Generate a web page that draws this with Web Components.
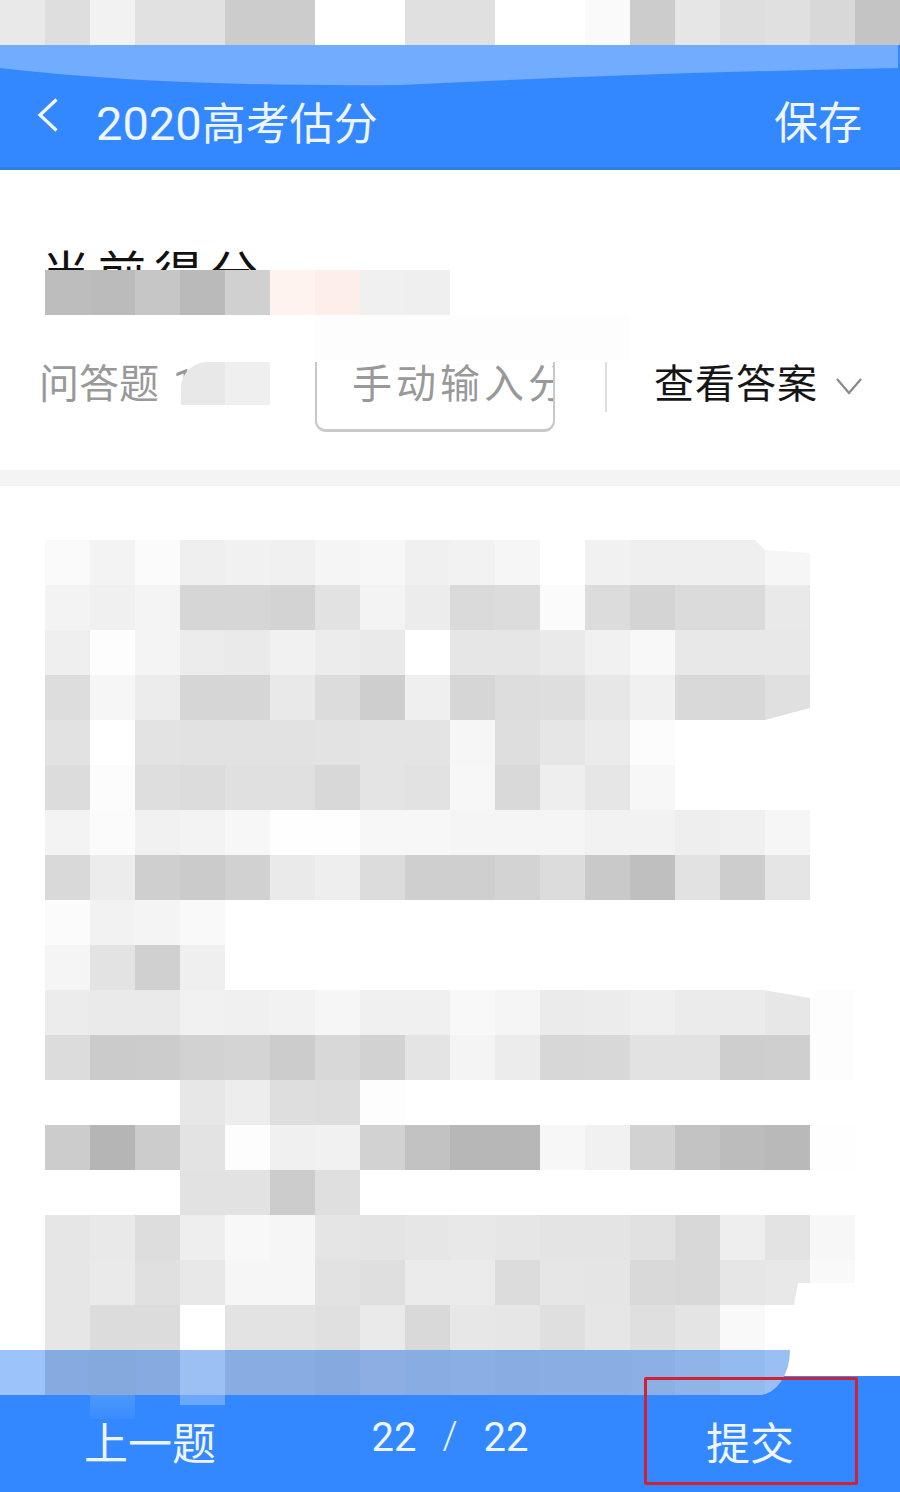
<!DOCTYPE html>
<html lang="zh">
<head>
<meta charset="utf-8">
<title>2020高考估分</title>
<style>
html,body{margin:0;padding:0;background:#fff}
body{width:900px;height:1492px;overflow:hidden;display:flex;flex-direction:column;font-family:Roboto,"Noto Sans CJK SC",sans-serif}
</style>
</head>
<body>
<mosaic-grid cell="45" data="e9 de f2 e1 e1 cc cc ff ff e0 e0 ff ff fa cc e6 de e0 d8 c4"></mosaic-grid>
<app-header>
  <span slot="title"><span style="font-size:47px">2020</span>高考估分</span>
  <span slot="action">保存</span>
</app-header>
<score-panel label="当前得分" data="bd bb c6 ba d0 fff3ef fdeeea f0 ef"></score-panel>
<action-row></action-row>
<section-gap></section-gap>
<question-body>
<mosaic-grid cell="45" cut data="
fa f3 fb ef f1 f0 f5 f7 f0 f2 f6 ff f1 ef ef ef f6 ff;
f3 f0 f4 d6 d6 d3 e2 f3 ec da dc fb dc d4 db db e9 ff;
ef fd f4 ec ea f1 ec ea ff e6 e6 ea f1 f8 e8 e8 e8 ff;
dd f6 ec d6 d6 e9 dc ce ef d6 dd de e7 f0 d9 d8 e0 ff;
e2 ff e3 e2 e2 e2 e3 e4 e4 f6 de e6 eb fc ff ff ff ff;
dc fc de dc e0 e0 d8 e4 e2 f7 d9 ee e6 f7 ff ff ff ff;
f3 fb f1 f3 f7 fe fe f7 f7 f5 f5 f5 f2 f2 ee f0 f6 ff;
d9 ec cf cb d1 ea ee dc cf cf d3 dc c9 bf e2 cd e5 ff;
fb f2 f4 f9 ff ff ff ff ff ff ff ff ff ff ff ff ff ff;
f5 e3 d0 ef ff ff ff ff ff ff ff ff ff ff ff ff ff ff;
ec ea ea f1 f0 f2 f6 f0 f0 f8 f5 eb ec ef eb eb e7 fd;
dc cb cc d2 d4 cc d8 d2 e4 f4 ec d7 d8 e2 e2 ce cf fd;
ff ff ff e7 ed de dd fd ff ff ff ff ff ff ff ff ff ff;
cc b5 cc e3 fd f0 f1 d2 c2 b7 b7 f7 f1 d2 c3 bc b9 fe;
ff ff ff e2 e2 cc df ff ff ff ff ff ff ff ff ff ff ff;
e6 e9 dd ee f8 f6 e5 e4 e6 e8 e6 e4 e4 e1 d8 ee e3 f7;
e6 ea e0 e8 f6 f6 e2 df eb eb dc e6 e5 d9 d8 e6 e8 f9;
e6 dc dc ff e3 e3 e0 ea d9 e7 e6 df e6 df e4 f9 ff ff"></mosaic-grid>
</question-body>
<bottom-nav>
  <span slot="prev">上一题</span>
  <span slot="current">22</span>
  <span slot="total">22</span>
  <span slot="submit">提交</span>
</bottom-nav>

<script>
class MosaicGrid extends HTMLElement{
  connectedCallback(){
    const size=+this.getAttribute('cell')||45;
    const rows=(this.getAttribute('data')||'').trim().split(';').map(r=>r.trim().split(/\s+/));
    const cols=rows[0].length;
    const root=this.attachShadow({mode:'open'});
    const cells=rows.flat().map(v=>{
      const c=v.length===2?'#'+v+v+v:'#'+v;
      return `<i style="background:${c}"></i>`;
    }).join('');
    const cut=this.hasAttribute('cut')?`<svg class="cut" width="${cols*size}" height="${rows.length*size}" aria-hidden="true"><path fill="#fff" d="M710 0 720 10 765 13V0ZM765 168 720 180H765ZM718 450 765 458V450ZM753 743 749 765H810V743Z"/></svg>`:'';
    root.innerHTML=`<style>
      :host{display:block;flex:none;position:relative;width:${cols*size}px;height:${rows.length*size}px}
      .g{display:grid;grid-template-columns:repeat(${cols},${size}px);grid-auto-rows:${size}px}
      i{display:block}
      .cut{position:absolute;left:0;top:0}
    </style><div class="g">${cells}</div>${cut}`;
  }
}
customElements.define('mosaic-grid',MosaicGrid);

class AppHeader extends HTMLElement{
  constructor(){
    super();
    this.attachShadow({mode:'open'}).innerHTML=`<style>
      :host{display:block;flex:none;position:relative;height:125px;box-sizing:border-box;background:#3388ff;border-bottom:3px solid #2e80e6;color:#eef5ff;overflow:hidden}
      .wave{position:absolute;left:0;top:0}
      .row{position:relative;display:flex;align-items:flex-start;height:100%;box-sizing:border-box;padding:52px 38px 0 37px}
      .back{flex:none;width:22px;height:36px;margin-right:37px}
      .t{font-size:44px;line-height:54px;font-weight:400;white-space:nowrap}
      .sp{flex:1}
      .a{font-size:44px;line-height:54px;font-weight:400;white-space:nowrap}
    </style>
    <svg class="wave" width="900" height="45" viewBox="0 0 900 45" aria-hidden="true"><path fill="#72acff" d="M0 0H898V23Q640 28 400 40Q160 42 0 23Z"/></svg>
    <div class="row">
      <svg class="back" viewBox="0 0 22 36" aria-hidden="true"><path d="M19.500 2.500 3 18 19.500 33.500" fill="none" stroke="#f4f9ff" stroke-width="3.200"/></svg>
      <div class="t"><slot name="title"></slot></div>
      <div class="sp"></div>
      <div class="a"><slot name="action"></slot></div>
    </div>`;
  }
}
customElements.define('app-header',AppHeader);

class ScorePanel extends HTMLElement{
  connectedCallback(){
    const root=this.attachShadow({mode:'open'});
    root.innerHTML=`<style>
      :host{display:block;flex:none;height:145px;box-sizing:border-box;padding:81px 0 0 42px;background:#fff;overflow:hidden}
      .label{height:19px;color:#111;font-size:48px;line-height:48px;letter-spacing:8px;white-space:nowrap}
      mosaic-grid{margin-left:3px}
    </style><div class="label">${this.getAttribute('label')}</div>
    <mosaic-grid cell="45" data="${this.getAttribute('data')}"></mosaic-grid>`;
  }
}
customElements.define('score-panel',ScorePanel);

class ActionRow extends HTMLElement{
  constructor(){
    super();
    this.attachShadow({mode:'open'}).innerHTML=`<style>
      :host{display:block;flex:none;position:relative;height:155px;background:#fff}
      .row{display:flex;align-items:flex-start;box-sizing:border-box;height:100%;padding:47px 0 0 39px;font-size:40px;line-height:46px;white-space:nowrap}
      .q{width:276px;color:#999;word-spacing:4px}
      .btn{box-sizing:border-box;width:240px;height:70px;padding-left:35px;border:solid #c9c9c9;border-width:0 2px 3px;border-radius:0 0 11px 11px;overflow:hidden;color:#999;letter-spacing:4px}
      .div{width:2px;height:50px;margin:0 47px 0 50px;background:#dedede}
      .look{color:#151515;width:164px;letter-spacing:1px}
      svg{flex:none;margin:14px 0 0 17px}
      .faint{position:absolute;left:315px;top:0;width:315px;height:45px;background:#fdfdfd}
      .mask{position:absolute;left:181px;top:47px;width:89px;height:43px;border-radius:26px 0 0 0;display:flex;overflow:hidden}
      .mask i{display:block;height:100%}
    </style>
    <div class="faint"></div>
    <div class="row">
      <div class="q">问答题 1</div>
      <div class="btn">手动输入分</div>
      <div class="div"></div>
      <div class="look">查看答案</div>
      <svg width="28" height="20" viewBox="0 0 28 20" aria-hidden="true"><path d="M2 3 14 17 26 3" fill="none" stroke="#8a8a8a" stroke-width="2.200"/></svg>
    </div>
    <div class="mask"><i style="width:44px;background:#e8e8e8"></i><i style="width:45px;background:#efefef"></i></div>`;
  }
}
customElements.define('action-row',ActionRow);

class SectionGap extends HTMLElement{
  constructor(){
    super();
    this.attachShadow({mode:'open'}).innerHTML=`<style>:host{display:block;flex:none;height:16px;background:#f4f4f4}</style>`;
  }
}
customElements.define('section-gap',SectionGap);

class QuestionBody extends HTMLElement{
  constructor(){
    super();
    this.attachShadow({mode:'open'}).innerHTML=`<style>:host{display:block;flex:none;box-sizing:border-box;height:864px;padding:54px 0 0 45px;background:#fff;overflow:hidden}</style><slot></slot>`;
  }
}
customElements.define('question-body',QuestionBody);

class BottomNav extends HTMLElement{
  constructor(){
    super();
    const band=['9cc4fb','85abe0','84a9dd','85abe1','9cc0f2','87ade2','87ade2','85aae0','8caee3','87ade3','89afe4','88ade2','89aee3','88aee3','8ab0e5','8eb4e8','94bbf0','9abff5']
      .map(c=>`<i style="background:#${c}"></i>`).join('');
    this.attachShadow({mode:'open'}).innerHTML=`<style>
      :host{display:block;flex:none;position:relative;height:142px;color:#eef5ff;overflow:hidden}
      .band{height:45px;background:linear-gradient(#fff 26px,#3388ff 26px)}
      .cells{display:grid;grid-template-columns:repeat(17,45px) 25px;width:790px;height:45px;border-bottom-right-radius:31px 45px;overflow:hidden}
      .cells i{display:block}
      .nav{position:relative;display:grid;grid-template-columns:repeat(3,300px);height:97px;background:#3388ff}
      .ghost{position:absolute;top:0}
      .item{display:flex;justify-content:center;padding-top:28px;font-size:44px;line-height:44px;white-space:nowrap}
      .pager{display:flex;justify-content:center;padding-top:21px;font-size:40px;line-height:44px;white-space:nowrap}
      .slash{width:67px;text-align:center;font-size:38px;line-height:40px;font-weight:300}
      .mark{position:absolute;left:644px;top:27px;box-sizing:border-box;width:214px;height:108px;border:3px solid #cf2233;border-radius:2px}
    </style>
    <div class="band"><div class="cells">${band}</div></div>
    <div class="nav">
      <div class="ghost" style="left:90px;width:45px;height:24px;background:linear-gradient(#4c97fc,#3a8cff)"></div>
      <div class="ghost" style="left:180px;width:45px;height:10px;background:#6aa8fb"></div>
      <div class="item"><slot name="prev"></slot></div>
      <div class="pager"><slot name="current"></slot><span class="slash">/</span><slot name="total"></slot></div>
      <div class="item"><slot name="submit"></slot></div>
    </div>
    <div class="mark"></div>`;
  }
}
customElements.define('bottom-nav',BottomNav);
</script>
</body>
</html>
